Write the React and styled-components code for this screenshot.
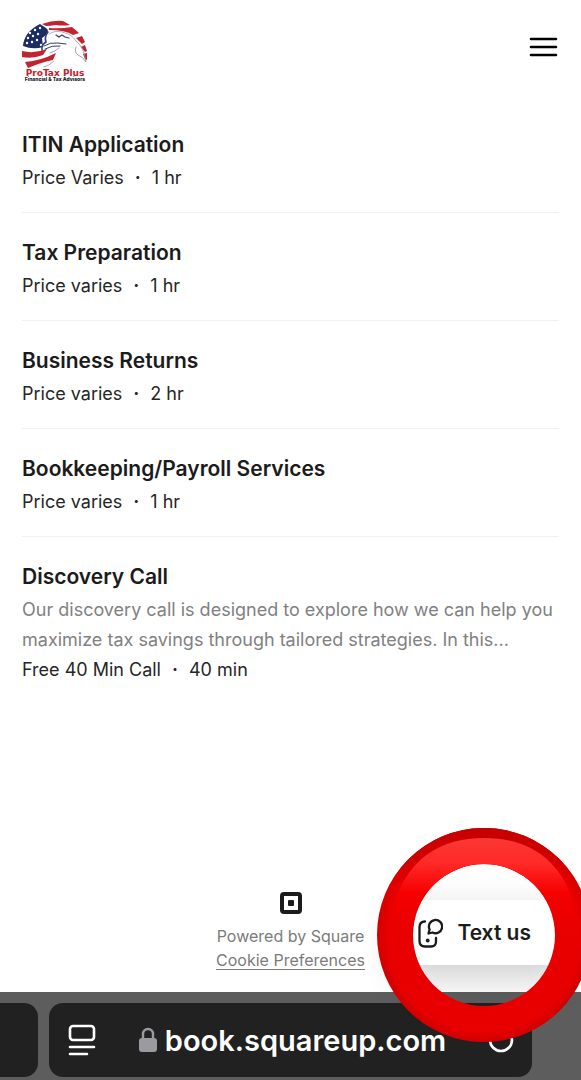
import React from 'react';
import styled, { createGlobalStyle } from 'styled-components';

const services = [
    { name: 'ITIN Application', price: 'Price Varies', time: '1 hr' },
    { name: 'Tax Preparation', price: 'Price varies', time: '1 hr' },
    { name: 'Business Returns', price: 'Price varies', time: '2 hr' },
    { name: 'Bookkeeping/Payroll Services', price: 'Price varies', time: '1 hr' },
    {
        name: 'Discovery Call',
        about: 'Our discovery call is designed to explore how we can help you maximize tax savings through tailored strategies. In this...',
        price: 'Free 40 Min Call',
        time: '40 min',
    },
];

const GlobalStyle = createGlobalStyle`
    * {
        box-sizing:border-box;
    }
    body {
        margin:0;
        background-color:#ffffff;
        color:#1b1b1b;
        font-family:Inter, "Liberation Sans", sans-serif;
    }
`;

const Page = styled.div`
    position:relative;
    display:flex;
    flex-direction:column;
    min-height:100vh;
    overflow:hidden;
`;

const Header = styled.header`
    display:flex;
    justify-content:space-between;
    align-items:flex-start;
    padding:20px 22px 14px;
`;

const IconButton = styled.button`
    all:unset;
    display:flex;
    padding:15px 0;
    cursor:pointer;
`;

const ServiceList = styled.ul`
    flex:1;
    list-style:none;
    margin:0;
    padding:9px 22px 0;
`;

const Service = styled.li`
    display:flex;
    flex-direction:column;
    padding:25px 0 19px;
    border-bottom:1px solid #f0f0f0;
    &:last-child {
        border-bottom:none;
    }
`;

const ServiceName = styled.h2`
    margin:0 0 3px;
    font-size:21px;
    line-height:30px;
    font-weight:600;
`;

const ServiceText = styled.p`
    margin:0;
    font-size:18px;
    line-height:30px;
    color:${props => props.$muted ? '#818181' : '#262626'};
`;

const Dot = styled.span`
    margin:0 11px;
    font-weight:700;
`;

const Footer = styled.footer`
    display:flex;
    flex-direction:column;
    align-items:center;
    padding-bottom:20px;
    font-size:16px;
    line-height:24px;
    color:#7b7b7b;
    svg {
        margin-bottom:10px;
    }
`;

const FooterLink = styled.a`
    color:inherit;
    text-underline-offset:3px;
`;

const BrowserBar = styled.div`
    display:grid;
    grid-template-columns:38px 1fr 38px;
    gap:11px;
    height:88px;
    padding:11px 0 3px;
    background-color:#5d5d5d;
`;

const Tab = styled.div`
    display:flex;
    justify-content:space-between;
    align-items:center;
    padding:0 18px;
    background-color:#212121;
    border-radius:${props => props.$cut ? '0 14px 14px 0' : '14px'};
`;

const Address = styled.div`
    display:flex;
    align-items:center;
    gap:8px;
    color:#ffffff;
    font-size:29px;
    font-weight:600;
`;

const TextUs = styled.button`
    position:absolute;
    right:14px;
    bottom:115px;
    display:flex;
    align-items:center;
    gap:14px;
    height:65px;
    padding:0 36px 0 20px;
    border:none;
    border-radius:8px;
    background-color:#ffffff;
    box-shadow:0 12px 36px rgba(0,0,0,0.2);
    color:#1b1b1b;
    font-family:inherit;
    font-size:21px;
    font-weight:600;
    cursor:pointer;
`;

const Ring = styled.svg`
    position:absolute;
    right:-10px;
    bottom:38px;
    pointer-events:none;
`;

const LogoText = styled.text`
    font-family:${props => props.$small ? 'inherit' : '"DejaVu Sans", sans-serif'};
    font-size:${props => props.$small ? '5px' : '9px'};
    font-weight:800;
    fill:${props => props.$small ? '#15182b' : '#c9202b'};
`;

const stars = [[8, 13], [13, 10], [18, 8], [6, 18], [11, 16], [16, 14], [5, 23], [10, 22], [15, 20], [19, 25]];

const Logo = () => (
    <svg width="66" height="62" viewBox="0 0 66 62" role="img" aria-label="ProTax Plus Financial & Tax Advisors">
        <path d="M1 26Q2 12 18 4L24 8Q28 11 24 15L20 18L21 27Q11 30 1 26Z" fill="#1b2c66" />
        {stars.map(([x, y]) => (
            <circle key={`${x}-${y}`} cx={x} cy={y} r="1.2" fill="#ffffff" />
        ))}
        <g fill="#c3232f">
            <path d="M20 4Q31 0 41 1L48 5Q40 6 34 5Q28 6 24 6Z" />
            <path d="M27 8Q38 9 50 7L57 13L51 15Q43 10 27 10Z" />
            <path d="M54 18L60 16L63 22L60 24Z" />
            <path d="M59 27L63 25L65 31L63 32Z" />
            <path d="M61 34L65 33L65 40L63 39Z" />
            <path d="M0 31Q12 34 25 29L21 35Q11 39 0 37Z" />
            <path d="M3 42Q18 41 34 33L31 40Q20 42 6 48Z" />
        </g>
        {/* eagle head */}
        <g fill="none" stroke="#34416e" strokeWidth="1" strokeLinecap="round">
            <path d="M26 12Q22 17 24 22Q19 25 20 30" strokeWidth="1.6" />
            <path d="M27 14Q33 10 40 12Q50 14 54 21" strokeWidth="0.4" />
            <path d="M34 15L37 17L40 15L43 17L47 18" strokeWidth="1.2" />
            <path d="M22 26Q28 22 36 23L44 24M23 29Q30 25 38 26" strokeWidth="1" />
            <path d="M28 33Q34 31 37 28" strokeWidth="0.5" />
            <path d="M54 21Q62 27 64 42Q60 36 56 35Q52 32 54 27" stroke="#8b8ea0" strokeWidth="0.8" />
            <path d="M32 41Q27 46 22 47" stroke="#9a9cab" strokeWidth="0.8" />
        </g>
        <LogoText x="33" y="56" textAnchor="middle">ProTax Plus</LogoText>
        <LogoText x="33" y="61" textAnchor="middle" $small>Financial &amp; Tax Advisors</LogoText>
    </svg>
);

const App = () => (
    <>
        <GlobalStyle />
        <Page>
            <Header>
                <Logo />
                <IconButton aria-label="Menu">
                    <svg width="30" height="24" viewBox="0 0 30 24" stroke="#000000" strokeWidth="2.6" strokeLinecap="round">
                        <path d="M2 4H27M2 12H27M2 20H27" />
                    </svg>
                </IconButton>
            </Header>
            <ServiceList>
                {services.map(service => (
                    <Service key={service.name}>
                        <ServiceName>{service.name}</ServiceName>
                        {service.about && <ServiceText $muted>{service.about}</ServiceText>}
                        <ServiceText>{service.price}<Dot>·</Dot>{service.time}</ServiceText>
                    </Service>
                ))}
            </ServiceList>
            <Footer>
                <svg width="22" height="22" viewBox="0 0 22 22">
                    <rect x="2" y="2" width="18" height="18" rx="2" fill="none" stroke="#1b1b1b" strokeWidth="4" />
                    <rect x="8" y="8" width="6" height="6" rx="1" fill="#1b1b1b" />
                </svg>
                <span>Powered by Square</span>
                <FooterLink href="#cookies">Cookie Preferences</FooterLink>
            </Footer>
            <BrowserBar>
                <Tab $cut />
                <Tab>
                    <svg width="30" height="34" viewBox="0 0 30 34" fill="none" stroke="#ffffff" strokeWidth="2.6" strokeLinecap="round">
                        <rect x="3" y="3" width="24" height="14" rx="3" />
                        <path d="M3 24H27M3 31H20" />
                    </svg>
                    <Address>
                        <svg width="18" height="26" viewBox="0 0 18 26">
                            <path d="M4 12V7a5 5 0 0 1 10 0v5" fill="none" stroke="#9b9aa1" strokeWidth="2.4" />
                            <rect x="0" y="11" width="18" height="14" rx="3" fill="#9b9aa1" />
                        </svg>
                        <span>book.squareup.com</span>
                    </Address>
                    <svg width="26" height="26" viewBox="0 0 26 26" fill="none" stroke="#ffffff" strokeWidth="2.6">
                        <circle cx="13" cy="13" r="11" />
                    </svg>
                </Tab>
            </BrowserBar>
            <TextUs>
                <svg width="26" height="32" viewBox="0 0 26 32" fill="none" stroke="#1b1b1b" strokeWidth="2.3" strokeLinecap="round" strokeLinejoin="round">
                    <path d="M8 4.500Q2.500 4.500 2.500 10V24Q2.500 29.500 8 29.500H14Q19 29.500 19 24.500V21" />
                    <path d="M12.600 12.500A6.600 6.600 0 1 1 15.600 15.500L11.500 16.500Z" />
                    <circle cx="10.700" cy="23.500" r="1.900" fill="#1b1b1b" stroke="none" />
                </svg>
                <span>Text us</span>
            </TextUs>
            <Ring width="214" height="214" viewBox="0 0 214 214">
                <defs>
                    <radialGradient id="base" gradientUnits="userSpaceOnUse" cx="107" cy="107" r="107">
                        <stop offset="0.9" stopColor="#e80000" />
                        <stop offset="1" stopColor="#d00000" />
                    </radialGradient>
                    <linearGradient id="shade" x1="0" y1="0" x2="0" y2="1">
                        <stop offset="0" stopColor="#c60000" />
                        <stop offset="0.15" stopColor="#d20000" />
                        <stop offset="0.4" stopColor="#f40000" stopOpacity="0" />
                    </linearGradient>
                    <linearGradient id="shine" gradientUnits="userSpaceOnUse" x1="0" y1="10" x2="0" y2="110">
                        <stop offset="0" stopColor="#f93834" />
                        <stop offset="0.25" stopColor="#ff2a28" />
                        <stop offset="0.55" stopColor="#f60000" />
                        <stop offset="1" stopColor="#ee0000" stopOpacity="0" />
                    </linearGradient>
                    <clipPath id="band">
                        <path clipRule="evenodd" d="M0 107a107 107 0 1 0 214 0a107 107 0 1 0 -214 0ZM36 107a71 71 0 1 0 142 0a71 71 0 1 0 -142 0Z" />
                    </clipPath>
                </defs>
                <g clipPath="url(#band)">
                    <rect width="214" height="214" fill="url(#base)" />
                    <rect width="214" height="214" fill="url(#shade)" />
                    <path d="M107 10C150 10 176 30 190 58Q200 80 204 110H10Q14 80 24 58C38 30 64 10 107 10Z" fill="url(#shine)" />
                </g>
            </Ring>
        </Page>
    </>
);

export default App;
